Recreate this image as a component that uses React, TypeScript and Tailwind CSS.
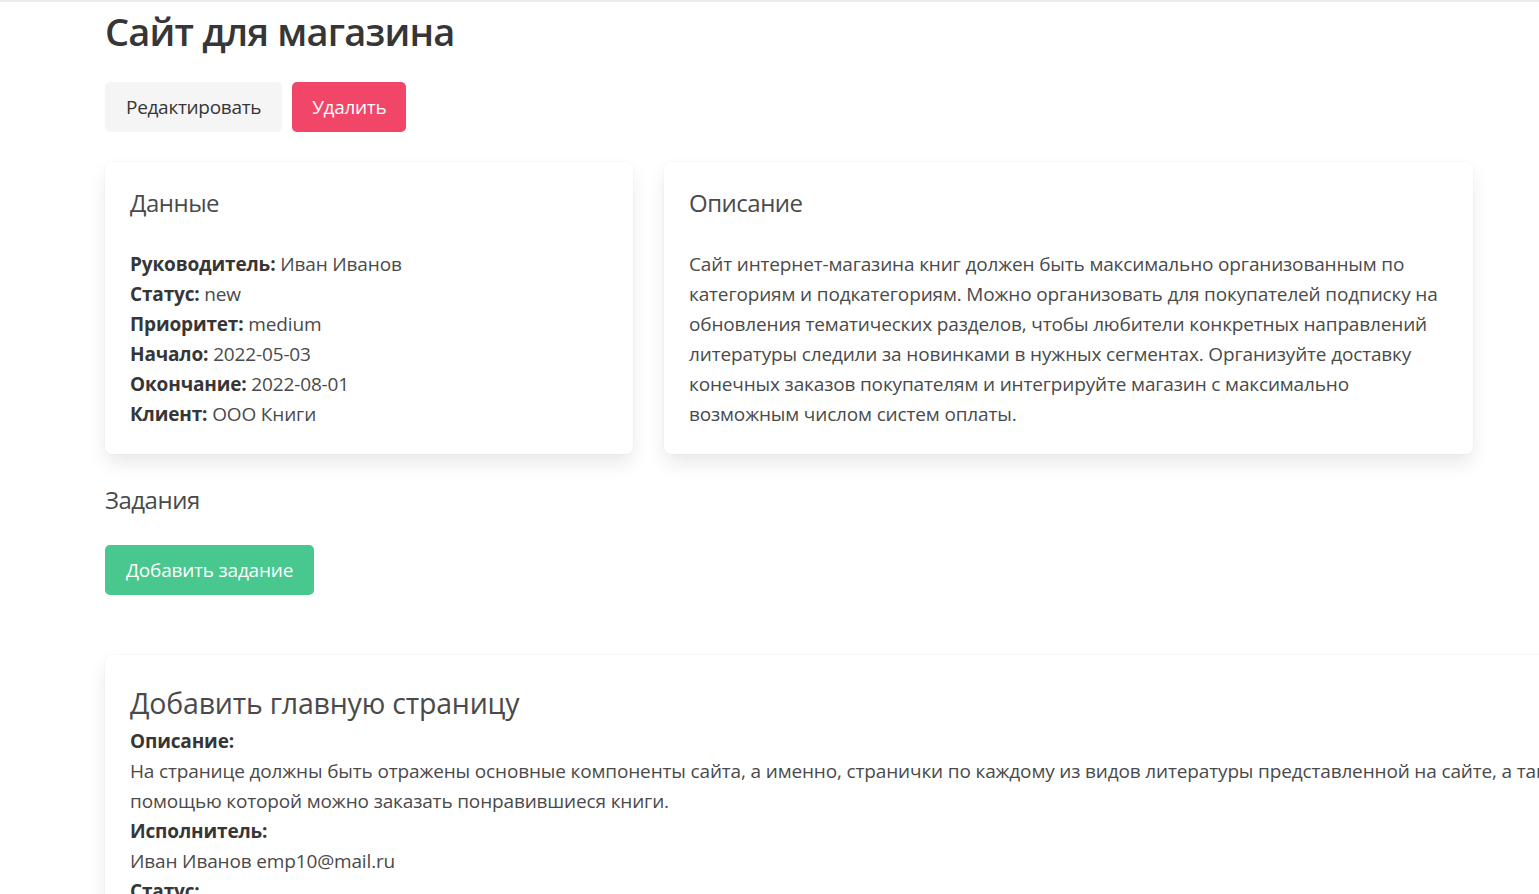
export default function App() {
  const shadow =
    "shadow-[0_10px_20px_-2.5px_rgba(10,10,10,0.1),0_0_0_1px_rgba(10,10,10,0.02)]";
  return (
    <div className="min-h-screen w-full overflow-hidden bg-white font-['Open_Sans',sans-serif] text-[19px] leading-[30px] tracking-[-0.15px] text-[#4a4a4a]">
      <div className="h-[2px] bg-[#ececec]" />
      <div className="w-[1368px] pl-[105px] box-content">
        <h1 className="mt-[7px] text-[38px] font-semibold leading-[45px] tracking-[-0.8px] text-[#363636]">
          Сайт для магазина
        </h1>
        <div className="mt-[28px] flex gap-[10px]">
          <button className="h-[50px] rounded-[5px] bg-[#f5f5f5] px-[21px] text-[19px] tracking-[-0.3px] text-[#363636]">
            Редактировать
          </button>
          <button className="h-[50px] rounded-[5px] bg-[#f14668] px-[20px] text-[19px] tracking-[-0.3px] text-white">
            Удалить
          </button>
        </div>
        <div className="mt-[30px] flex gap-[31px]">
          <div className={`w-[528px] shrink-0 rounded-[7px] bg-white p-[25px] ${shadow}`}>
            <h2 className="text-[24px] leading-[31px] tracking-[-0.5px] text-[#4a4a4a]">Данные</h2>
            <div className="mt-[31px]">
              <div><b className="text-[#363636]">Руководитель:</b> Иван Иванов</div>
              <div><b className="text-[#363636]">Статус:</b> new</div>
              <div><b className="text-[#363636]">Приоритет:</b> medium</div>
              <div><b className="text-[#363636]">Начало:</b> 2022-05-03</div>
              <div><b className="text-[#363636]">Окончание:</b> 2022-08-01</div>
              <div><b className="text-[#363636]">Клиент:</b> ООО Книги</div>
            </div>
          </div>
          <div className={`w-[809px] shrink-0 rounded-[7px] bg-white p-[25px] ${shadow}`}>
            <h2 className="text-[24px] leading-[31px] tracking-[-0.5px] text-[#4a4a4a]">Описание</h2>
            <p className="mt-[31px] whitespace-nowrap">
              Сайт интернет-магазина книг должен быть максимально организованным по
              <br />
              категориям и подкатегориям. Можно организовать для покупателей подписку на
              <br />
              обновления тематических разделов, чтобы любители конкретных направлений
              <br />
              литературы следили за новинками в нужных сегментах. Организуйте доставку
              <br />
              конечных заказов покупателям и интегрируйте магазин с максимально
              <br />
              возможным числом систем оплаты.
            </p>
          </div>
        </div>
        <h2 className="mt-[30px] text-[24px] leading-[31px] tracking-[-0.5px] text-[#4a4a4a]">Задания</h2>
        <button className="mt-[30px] h-[50px] rounded-[5px] bg-[#48c78e] px-[21px] text-[19px] tracking-[-0.2px] text-white">
          Добавить задание
        </button>
        <div className={`mt-[60px] w-[1600px] rounded-[7px] bg-white px-[25px] pt-[25px] pb-[25px] ${shadow}`}>
          <h3 className="text-[28.5px] leading-[46px] tracking-[-0.2px] text-[#4a4a4a]">Добавить главную страницу</h3>
          <div><b className="text-[#363636]">Описание:</b></div>
          <p className="whitespace-nowrap">
            На странице должны быть отражены основные компоненты сайта, а именно, странички по каждому из видов литературы представленной на сайте, а также корзина, с
            <br />
            помощью которой можно заказать понравившиеся книги.
          </p>
          <div><b className="text-[#363636]">Исполнитель:</b></div>
          <div>Иван Иванов emp10@mail.ru</div>
          <div><b className="text-[#363636]">Статус:</b></div>
          <div>new</div>
        </div>
      </div>
    </div>
  );
}
